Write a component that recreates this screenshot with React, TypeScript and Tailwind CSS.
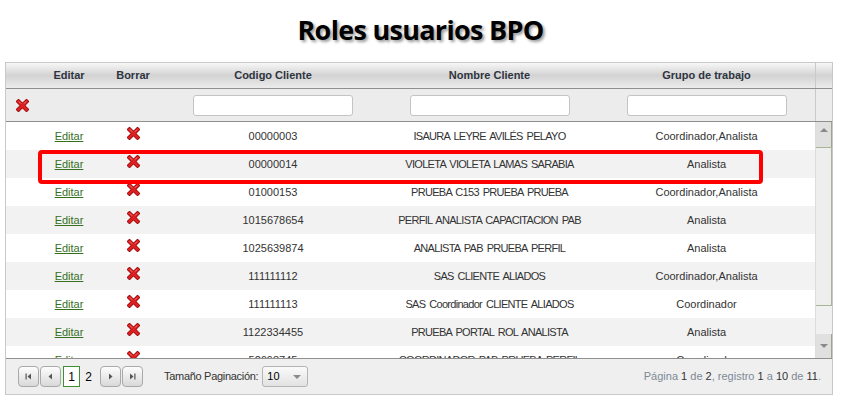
import React from 'react';

type Row = { codigo: string; nombre: string; grupo: string };

const rows: Row[] = [
  { codigo: '00000003', nombre: 'ISAURA LEYRE AVILÉS PELAYO', grupo: 'Coordinador,Analista' },
  { codigo: '00000014', nombre: 'VIOLETA VIOLETA LAMAS SARABIA', grupo: 'Analista' },
  { codigo: '01000153', nombre: 'PRUEBA C153 PRUEBA PRUEBA', grupo: 'Coordinador,Analista' },
  { codigo: '1015678654', nombre: 'PERFIL ANALISTA CAPACITACION PAB', grupo: 'Analista' },
  { codigo: '1025639874', nombre: 'ANALISTA PAB PRUEBA PERFIL', grupo: 'Analista' },
  { codigo: '111111112', nombre: 'SAS CLIENTE ALIADOS', grupo: 'Coordinador,Analista' },
  { codigo: '111111113', nombre: 'SAS Coordinador CLIENTE ALIADOS', grupo: 'Coordinador' },
  { codigo: '1122334455', nombre: 'PRUEBA PORTAL ROL ANALISTA', grupo: 'Analista' },
  { codigo: '52698745', nombre: 'COORDINADOR PAB PRUEBA PERFIL', grupo: 'Coordinador' },
];

const DeleteIcon = () => (
  <svg width="13" height="13" viewBox="0 0 13 13">
    <path d="M2.5 2.5 L10.5 10.5 M10.5 2.5 L2.5 10.5" stroke="#9b0d0d" strokeWidth="4.2" strokeLinecap="square" />
    <path d="M2.5 2.5 L10.5 10.5 M10.5 2.5 L2.5 10.5" stroke="#e02020" strokeWidth="2.6" strokeLinecap="square" />
    <path d="M3 2.6 L5 4.6 M10 2.6 L8 4.6" stroke="#f38a8a" strokeWidth="0.9" />
  </svg>
);

const PagerButton = ({ children }: { children: React.ReactNode }) => (
  <div className="w-[21px] h-[21px] rounded-[4px] border border-[#a9a9a9] bg-gradient-to-b from-[#fdfdfd] to-[#d9d9d9] flex items-center justify-center">
    {children}
  </div>
);

const filterInput = 'w-[160px] h-[21px] rounded-[3px] border border-[#c4c4c4] bg-white';

const App = () => {
  return (
    <div className="w-[841px] h-[402px] bg-white text-[#333] font-['Liberation_Sans',sans-serif] overflow-hidden">
      <div className="h-[62px] flex items-start justify-center pt-[13px]">
        <h1 className="text-[27px] leading-[34px] font-bold text-black font-['Open_Sans',sans-serif] tracking-[-0.7px] [text-shadow:2px_2px_3px_rgba(0,0,0,0.4)]">
          Roles usuarios BPO
        </h1>
      </div>

      <div className="ml-[5px] w-[828px] border border-[#c9c9c9]">
        {/* header */}
        <div className="flex h-[26px] bg-gradient-to-b from-[#f7f7f7] via-[#d3d3d3] to-[#ececec] text-[11px] font-bold text-[#2e3440] border-b border-[#8f8f8f]">
          <div className="w-[31px]" />
          <div className="w-[64px] flex items-center justify-center">Editar</div>
          <div className="w-[64px] flex items-center justify-center">Borrar</div>
          <div className="w-[216px] flex items-center justify-center">Codigo Cliente</div>
          <div className="w-[217px] flex items-center justify-center">Nombre Cliente</div>
          <div className="w-[217px] flex items-center justify-center">Grupo de trabajo</div>
          <div className="flex-1 border-l border-[#c9c9c9]" />
        </div>

        {/* filters */}
        <div className="flex h-[33px] bg-[#ececec] border-b border-[#8f8f8f]">
          <div className="w-[31px] flex items-center justify-center pl-[1px]">
            <DeleteIcon />
          </div>
          <div className="w-[64px]" />
          <div className="w-[64px]" />
          <div className="w-[216px] flex items-center justify-center">
            <div className={filterInput} />
          </div>
          <div className="w-[217px] flex items-center justify-center">
            <div className={filterInput} />
          </div>
          <div className="w-[217px] flex items-center justify-center">
            <div className={filterInput} />
          </div>
          <div className="flex-1 border-l border-[#c9c9c9]" />
        </div>

        {/* body */}
        <div className="flex h-[237px] border-b border-[#8f8f8f]">
          <div className="relative w-[809px] overflow-hidden text-[11px]">
            {rows.map((r, i) => (
              <div key={r.codigo} className={`flex h-[28px] items-center pt-[1px] ${i % 2 === 1 ? 'bg-[#f2f2f2]' : 'bg-white'}`}>
                <div className="w-[31px]" />
                <div className="w-[64px] text-center">
                  <a className="text-[#36701c] underline">Editar</a>
                </div>
                <div className="w-[64px] flex justify-center -mt-[7px]">
                  <DeleteIcon />
                </div>
                <div className="w-[216px] text-center">{r.codigo}</div>
                <div className="w-[217px] text-center tracking-[-0.7px] [word-spacing:1.5px]">{r.nombre}</div>
                <div className="w-[217px] text-center">{r.grupo}</div>
              </div>
            ))}
            <div className="absolute left-[32px] top-[28px] w-[725px] h-[34px] border-[4px] border-[#ff0000] rounded-[4px]" />
          </div>
          {/* scrollbar */}
          <div className="flex-1 flex flex-col bg-[#eeeeee] border-l border-[#dcdcdc]">
            <div className="h-[25px] bg-[#e0e0e0] border-r border-[#9aa58a] flex items-start justify-center pt-[6px]">
              <div className="w-0 h-0 border-l-[4px] border-r-[4px] border-b-[4px] border-l-transparent border-r-transparent border-b-[#8a8a8a]" />
            </div>
            <div className="h-[159px] bg-[#eeeeee] border-r border-y border-[#a9b398]" />
            <div className="flex-1 bg-[#f0f0f0]" />
            <div className="h-[24px] bg-[#e0e0e0] border-r border-[#9aa58a] flex items-center justify-center">
              <div className="w-0 h-0 border-l-[4px] border-r-[4px] border-t-[4px] border-l-transparent border-r-transparent border-t-[#8a8a8a]" />
            </div>
          </div>
        </div>

        {/* footer */}
        <div className="flex items-center h-[35px] bg-[#efefef] pl-[12px] pr-[11px] text-[11px]">
          <div className="flex items-center gap-[1px]">
            <PagerButton>
              <svg width="9" height="9" viewBox="0 0 9 9">
                <rect x="1.5" y="1.5" width="1.2" height="6" fill="#555" />
                <path d="M7 1.5 L3.5 4.5 L7 7.5 Z" fill="#555" />
              </svg>
            </PagerButton>
            <PagerButton>
              <svg width="9" height="9" viewBox="0 0 9 9">
                <path d="M6 1.5 L2.5 4.5 L6 7.5 Z" fill="#555" />
              </svg>
            </PagerButton>
            <div className="ml-[1px] w-[17px] h-[21px] border border-[#3e8f2e] bg-white flex items-center justify-center text-[12px] text-black">
              1
            </div>
            <div className="w-[15px] h-[21px] flex items-center justify-center text-[12px] text-black mr-[3px]">2</div>
            <PagerButton>
              <svg width="9" height="9" viewBox="0 0 9 9">
                <path d="M3 1.5 L6.5 4.5 L3 7.5 Z" fill="#555" />
              </svg>
            </PagerButton>
            <PagerButton>
              <svg width="9" height="9" viewBox="0 0 9 9">
                <path d="M2 1.5 L5.5 4.5 L2 7.5 Z" fill="#555" />
                <rect x="6.3" y="1.5" width="1.2" height="6" fill="#555" />
              </svg>
            </PagerButton>
          </div>
          <span className="ml-[21px] text-[#333] tracking-[-0.3px]">Tamaño Paginación:</span>
          <div className="ml-[4px] w-[46px] h-[21px] rounded-[3px] border border-[#b5b5b5] bg-gradient-to-b from-[#fafafa] to-[#e2e2e2] flex items-center justify-between pl-[4px] pr-[6px] text-[11px] text-black">
            <span>10</span>
            <div className="w-0 h-0 border-l-[4px] border-r-[4px] border-t-[4px] border-l-transparent border-r-transparent border-t-[#8a8a8a]" />
          </div>
          <div className="ml-auto text-[#7d8a96]">
            Página <span className="text-[#333]">1</span> de <span className="text-[#333]">2</span>, registro{' '}
            <span className="text-[#333]">1</span> a <span className="text-[#333]">10</span> de{' '}
            <span className="text-[#333]">11</span>.
          </div>
        </div>
      </div>
    </div>
  );
};

export default App;
